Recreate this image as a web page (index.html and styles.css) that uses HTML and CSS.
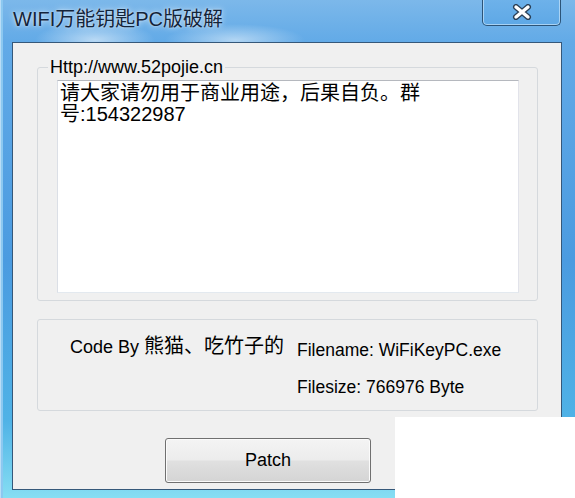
FILE: index.html
```html
<!DOCTYPE html>
<html lang="zh-CN">
<head>
  <meta charset="UTF-8" />
  <title>WIFI万能钥匙PC版破解</title>
  <link rel="stylesheet" href="styles.css">
</head>
<body>

  <div class="window">
    <div class="titlebar">
      <span class="title">WIFI万能钥匙PC版破解</span>
      <button class="close-btn" title="关闭">
        <svg width="22" height="16" viewBox="0 0 22 16">
          <path d="M5 3 L17 13 M17 3 L5 13" stroke="#2b3f55" stroke-width="6" stroke-linecap="round" fill="none"/>
          <path d="M5 3 L17 13 M17 3 L5 13" stroke="#ffffff" stroke-width="3.4" stroke-linecap="round" fill="none"/>
        </svg>
      </button>
    </div>

    <div class="frame">
      <div class="client">
        <fieldset class="group group-notice">
          <legend>Http://www.52pojie.cn</legend>
          <div class="memo">请大家请勿用于商业用途，后果自负。群<br>号:154322987</div>
        </fieldset>

        <fieldset class="group group-info">
          <div class="author">Code By <span class="cn">熊猫、吃竹子的</span></div>
          <div class="file-info">
            <div>Filename: WiFiKeyPC.exe</div>
            <div>Filesize: 766976 Byte</div>
          </div>
        </fieldset>

        <div class="actions">
          <button class="patch-btn">Patch</button>
        </div>
      </div>
    </div>

    <!-- blank corner pasted over the window -->
    <div class="blank-corner"></div>
  </div>

</body>
</html>
```

FILE: styles.css
```css
html, body {
  margin: 0;
  padding: 0;
  background: #ffffff;
}

body {
  font-family: "Liberation Sans", "Noto Sans CJK SC", sans-serif;
  color: #000;
}

.window {
  position: relative;
  width: 575px;
  height: 498px;
  display: flex;
  flex-direction: column;
  background:
    radial-gradient(ellipse 60px 18px at 95px 40px, rgba(255,255,255,0.55), rgba(255,255,255,0)),
    radial-gradient(ellipse 70px 16px at 235px 40px, rgba(255,255,255,0.5), rgba(255,255,255,0)),
    linear-gradient(to bottom, #7cb8ea 0, #62aae7 42px, #4b9be0 260px, #4fb2e6 420px, #86def3 100%);
  box-shadow: inset 1px 0 0 #b9ddf7, inset 3px 0 0 #8cc8f0;
  overflow: hidden;
}

/* ---- title bar ---- */

.titlebar {
  height: 42px;
  display: flex;
  justify-content: space-between;
  align-items: flex-start;
}

.title {
  margin: 7px 0 0 13px;
  font-size: 20px;
  line-height: 24px;
  color: #13243a;
  text-shadow: 0 0 6px rgba(255, 255, 255, 0.8), 0 0 2px rgba(255, 255, 255, 0.6);
}

.close-btn {
  margin: -1px 14px 0 0;
  width: 79px;
  height: 27px;
  padding: 0;
  display: flex;
  align-items: center;
  justify-content: center;
  border: 1px solid #2c5478;
  border-top: none;
  border-radius: 0 0 5px 5px;
  background: linear-gradient(to bottom, #6eb2ea, #5ea8e6);
  box-shadow: inset 0 0 0 1px rgba(200, 228, 250, 0.7);
  cursor: pointer;
}

/* ---- client area ---- */

.frame {
  flex: 1;
  display: flex;
  padding: 0 13px 8px 12px;
}

.client {
  flex: 1;
  display: flex;
  flex-direction: column;
  background: #f0f0f0;
  border: 1px solid #35587a;
}

.group {
  margin: 0 23px 0 24px;
  border: 1px solid #d5d9dd;
  border-radius: 3px;
  min-width: 0;
}

.group-notice {
  margin-top: 14px;
  padding: 3px 18px 7px 19px;
}

.group-notice legend {
  margin-left: -9px;
  padding: 0 2px;
  font-size: 18px;
  line-height: 20px;
  color: #000;
}

.memo {
  height: 207px;
  padding: 2px 2px;
  background: #ffffff;
  border: 1px solid;
  border-color: #b5b8be #e2e3ea #e3e9ef #dbdfe6;
  font-size: 20px;
  line-height: 21px;
}

.group-info {
  margin-top: 18px;
  padding: 14px 10px 11px 32px;
  display: grid;
  grid-template-columns: 227px auto;
}

.author {
  font-size: 18px;
  line-height: 24px;
}

.author .cn {
  font-size: 20px;
}

.file-info {
  padding-top: 4px;
  display: flex;
  flex-direction: column;
  gap: 13px;
  font-size: 17.5px;
  line-height: 24px;
}

.actions {
  margin-top: 27px;
  padding-left: 152px;
}

.patch-btn {
  width: 206px;
  height: 45px;
  font-family: "Liberation Sans", sans-serif;
  font-size: 18px;
  color: #000;
  border: 1px solid #707070;
  border-radius: 3px;
  background: linear-gradient(to bottom, #f4f4f4 0%, #ececec 48%, #e0e0e0 52%, #d4d4d4 100%);
  box-shadow: inset 0 0 0 1px #fbfbfb;
  cursor: pointer;
}

.blank-corner {
  position: absolute;
  left: 395px;
  top: 417px;
  width: 180px;
  height: 81px;
  background: #ffffff;
}
```
